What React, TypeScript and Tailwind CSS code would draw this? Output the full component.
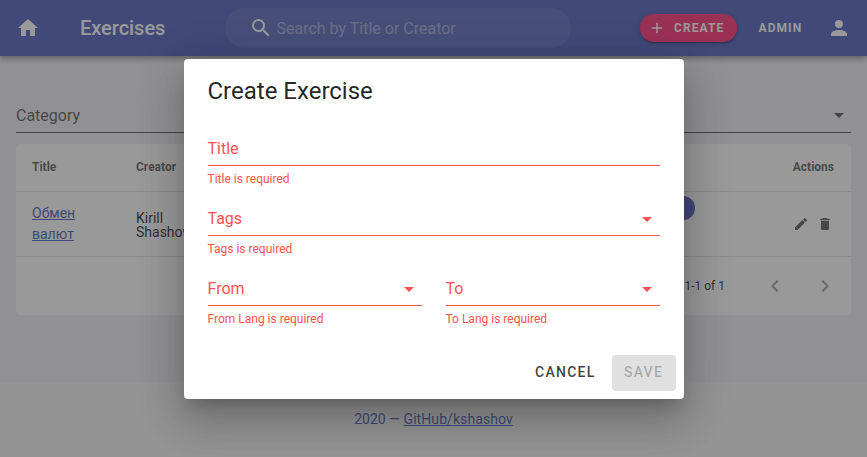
import React from "react";

const paths = {
  home: "M10,20V14H14V20H19V12H22L12,3L2,12H5V20H10Z",
  magnify:
    "M9.5,3A6.5,6.5 0 0,1 16,9.5C16,11.11 15.41,12.59 14.44,13.73L14.71,14H15.5L20.5,19L19,20.5L14,15.5V14.71L13.73,14.44C12.59,15.41 11.11,16 9.5,16A6.5,6.5 0 0,1 3,9.5A6.5,6.5 0 0,1 9.5,3M9.5,5C7,5 5,7 5,9.5C5,12 7,14 9.5,14C12,14 14,12 14,9.5C14,7 12,5 9.5,5Z",
  plus: "M19,13H13V19H11V13H5V11H11V5H13V11H19V13Z",
  account:
    "M12,4A4,4 0 0,1 16,8A4,4 0 0,1 12,12A4,4 0 0,1 8,8A4,4 0 0,1 12,4M12,14C16.42,14 20,15.79 20,18V20H4V18C4,15.79 7.58,14 12,14Z",
  menuDown: "M7,10L12,15L17,10H7Z",
  pencil:
    "M20.71,7.04C21.1,6.65 21.1,6 20.71,5.63L18.37,3.29C18,2.9 17.35,2.9 16.96,3.29L15.12,5.12L18.87,8.87M3,17.25V21H6.75L17.81,9.93L14.06,6.18L3,17.25Z",
  trash:
    "M19,4H15.5L14.5,3H9.5L8.5,4H5V6H19M6,19A2,2 0 0,0 8,21H16A2,2 0 0,0 18,19V7H6V19Z",
  left: "M15.41,16.58L10.83,12L15.41,7.41L14,6L8,12L14,18L15.41,16.58Z",
  right: "M8.59,16.58L13.17,12L8.59,7.41L10,6L16,12L10,18L8.59,16.58Z",
};

function Icon({ name, className = "size-6" }: { name: keyof typeof paths; className?: string }) {
  return (
    <svg viewBox="0 0 24 24" className={`shrink-0 ${className}`} fill="currentColor">
      <path d={paths[name]} />
    </svg>
  );
}

function Field({ label, error, select = false }: { label: string; error: string; select?: boolean }) {
  return (
    <div className="h-[70px] flex-1 text-[#ff5252]">
      <div className="flex h-9 items-end justify-between border-b border-[#ff5252] pb-1.5">
        <span className="text-base leading-5">{label}</span>
        {select && <Icon name="menuDown" className="mr-[0.5px] -mb-[2px] size-6" />}
      </div>
      <div className="pt-[7px] text-xs leading-3">{error}</div>
    </div>
  );
}

function AppBar() {
  return (
    <header className="relative flex h-14 items-center bg-[#5c6bc0] px-4 text-white shadow-[0_2px_4px_-1px_rgba(0,0,0,0.2),0_4px_5px_0_rgba(0,0,0,0.14),0_1px_10px_0_rgba(0,0,0,0.12)]">
      <Icon name="home" />
      <h1 className="ml-10 w-[145px] text-xl leading-5 font-medium tracking-[-0.03px]">Exercises</h1>
      <div className="flex h-10 w-[346px] items-center rounded-full bg-white/[0.08] pl-6">
        <Icon name="magnify" />
        <span className="ml-[3.5px] pt-px text-base text-white/42">Search by Title or Creator</span>
      </div>
      <button className="ml-[69px] flex h-7 w-[97px] items-center rounded-full bg-[#ff4081] pl-2 text-xs font-bold tracking-[1.07px] shadow-[0_3px_1px_-2px_rgba(0,0,0,0.2),0_2px_2px_0_rgba(0,0,0,0.14),0_1px_5px_0_rgba(0,0,0,0.12)]">
        <Icon name="plus" className="size-[18px]" />
        <span className="ml-2">CREATE</span>
      </button>
      <span className="ml-[21.5px] text-xs font-bold tracking-[1.07px]">ADMIN</span>
      <Icon name="account" className="ml-auto size-6" />
    </header>
  );
}

function ExerciseTable() {
  return (
    <section className="mt-[11px] h-[171px] rounded bg-white text-black/80">
      <div className="flex h-12 items-center border-b border-black/12 px-4 pb-0.5 text-xs font-bold text-black/60">
        <span className="w-[104px]">Title</span>
        <span>Creator</span>
        <span className="mr-px ml-auto">Actions</span>
      </div>
      <div className="flex h-[65px] items-center border-b border-black/12 px-4 text-sm">
        <a className="w-[104px] leading-[21px] text-[#5c6bc0] underline">
          Обмен
          <br />
          валют
        </a>
        <div className="w-[70px] pt-0.5 leading-[14px]">
          Kirill
          <br />
          Shashov
        </div>
        <span className="ml-auto h-6 w-20 -translate-y-4 rounded-full bg-[#5c6bc0]" />
        <div className="ml-[98px] flex gap-2 pr-[2px] text-black/60">
          <Icon name="pencil" className="size-4" />
          <Icon name="trash" className="size-4" />
        </div>
      </div>
      <div className="flex h-[58px] items-center justify-end pr-3.5 text-xs">
        <span>1-1 of 1</span>
        <Icon name="left" className="ml-[38px] size-6 text-black/35" />
        <Icon name="right" className="ml-[26px] size-6 text-black/35" />
      </div>
    </section>
  );
}

function CreateDialog() {
  return (
    <div role="dialog" className="flex h-[340px] w-[500px] flex-col rounded bg-white shadow-[0_11px_15px_-7px_rgba(0,0,0,0.2),0_24px_38px_3px_rgba(0,0,0,0.14),0_9px_46px_8px_rgba(0,0,0,0.12)]">
      <h2 className="px-6 pt-4 text-2xl leading-8 text-black/87">Create Exercise</h2>
      <div className="px-6 pt-[23px]">
        <div className="flex">
          <Field label="Title" error="Title is required" />
        </div>
        <div className="flex">
          <Field label="Tags" error="Tags is required" select />
        </div>
        <div className="flex gap-6">
          <Field label="From" error="From Lang is required" select />
          <Field label="To" error="To Lang is required" select />
        </div>
      </div>
      <div className="mt-auto flex justify-end gap-1 p-2 text-sm font-medium tracking-[1.25px]">
        <button className="h-9 px-3 pb-0.5 text-black/75">CANCEL</button>
        <button className="h-9 w-16 rounded bg-black/12 pb-0.5 text-black/26">SAVE</button>
      </div>
    </div>
  );
}

export default function App() {
  return (
    <div className="relative h-[457px] w-full overflow-hidden bg-[#f1f1f6] font-['Roboto',sans-serif]">
      <AppBar />
      <main className="h-[327px] px-4 pt-[41px]">
        <div className="flex h-9 items-center justify-between border-b border-black/60 text-base text-black/60">
          <span className="pt-0.5">Category</span>
          <Icon name="menuDown" className="mt-px size-6" />
        </div>
        <ExerciseTable />
      </main>
      <footer className="flex h-[74px] items-center justify-center bg-[#f5f5f5] pb-0.5 text-sm text-[#5c6bc0]">
        2020 —&nbsp;<a className="tracking-[0.08px] underline">GitHub/kshashov</a>
      </footer>
      <div className="absolute inset-0 flex items-center justify-center bg-[#212121]/46">
        <CreateDialog />
      </div>
    </div>
  );
}
